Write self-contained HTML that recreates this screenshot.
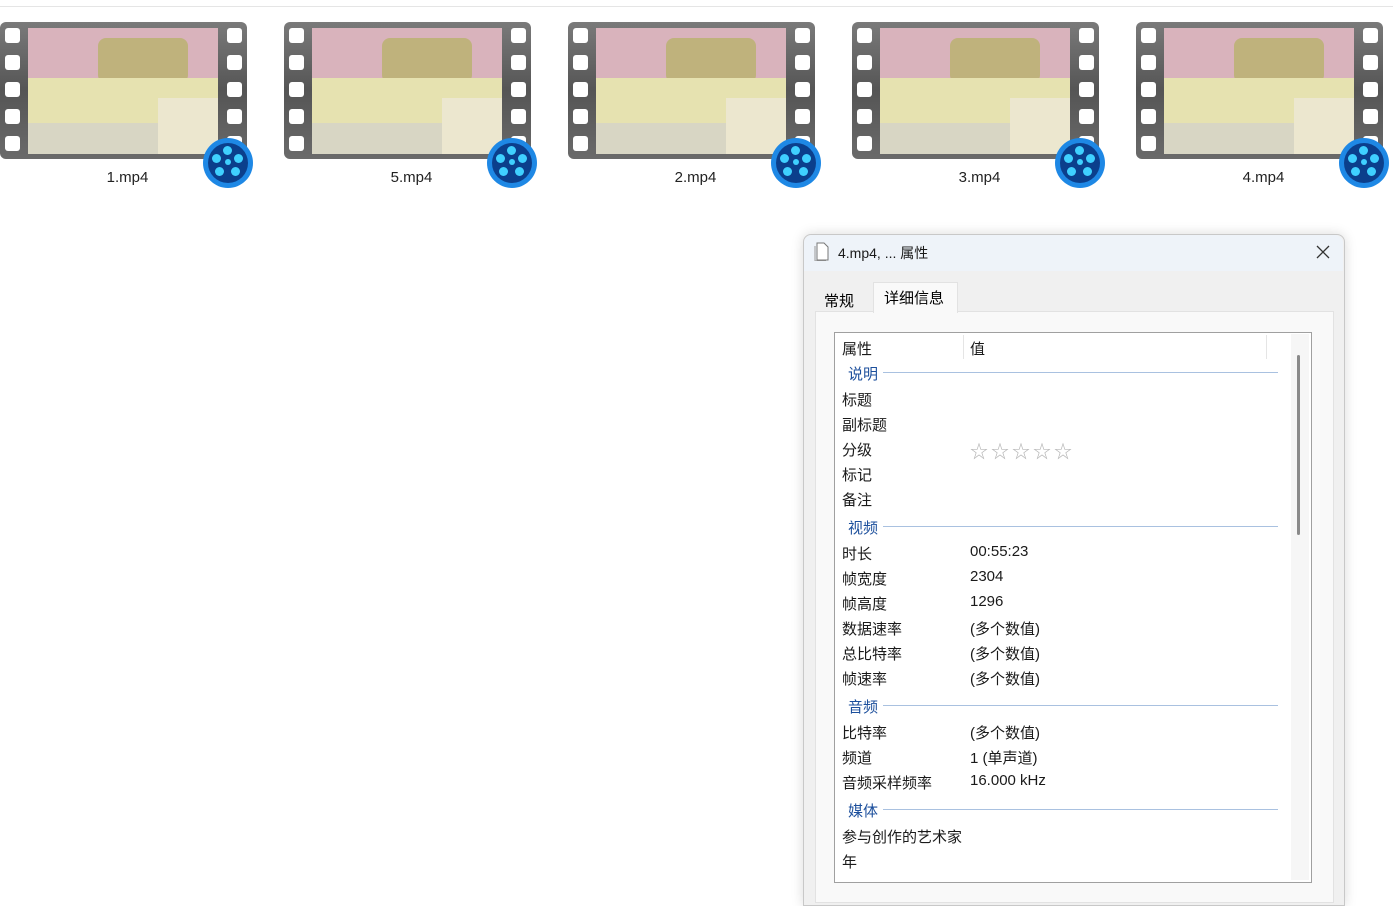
<!DOCTYPE html>
<html><head><meta charset="utf-8"><style>
body{margin:0;width:1393px;height:896px;background:#fff;position:relative;overflow:hidden;font-family:"Liberation Sans","Noto Sans CJK SC",sans-serif;}
.a{position:absolute}
.film{position:absolute;top:22px;width:247px;height:137px;background:linear-gradient(#7a7a7a,#555 50%,#6a6a6a);border-radius:6px}
.hole{position:absolute;width:15px;height:15px;background:#fff;border-radius:3px}
.pic{position:absolute;left:28px;top:6px;width:190px;height:126px;background:#d9b3bc;overflow:hidden}
.ico{position:absolute;left:203px;top:116px;width:50px;height:50px;border-radius:50%;background:#1e88e5}
.ico b{position:absolute;left:5px;top:5px;width:40px;height:40px;border-radius:50%;background:#0b3f8c}
.ico i{position:absolute;width:9px;height:9px;border-radius:50%;background:#3fd0ff}
.lbl{position:absolute;top:169px;width:247px;text-align:center;font-size:15px;color:#222}
.t{position:absolute;font-size:15px;color:#1a1a1a;left:842px}
.v{position:absolute;font-size:15px;color:#1a1a1a;left:970px}
.g{position:absolute;left:848px;font-size:15px;color:#1c4f9c}
.gl{position:absolute;left:883px;width:395px;height:1px;background:#a9c1e0}
</style></head><body>
<div class="a" style="left:0;top:6px;width:1393px;height:1px;background:#e5e5e5"></div>

<div id="thumbs"></div>
<script>
var h='';[0,284,568,852,1136].forEach(function(x,i){
var n=['1','5','2','3','4'][i];
h+='<div class="film" style="left:'+x+'px">';
[6,33,60,87,114].forEach(function(y){h+='<div class="hole" style="left:5px;top:'+y+'px"></div><div class="hole" style="left:227px;top:'+y+'px"></div>';});
h+='<div class="pic"><div class="a" style="left:70px;top:10px;width:90px;height:45px;background:#bfb27c;border-radius:8px"></div><div class="a" style="left:0;top:50px;width:190px;height:80px;background:#e6e2b0"></div><div class="a" style="left:0;top:95px;width:190px;height:31px;background:#d8d6c4"></div><div class="a" style="left:130px;top:70px;width:60px;height:56px;background:#ece7cf"></div></div>';
h+='<div class="ico"><b></b><i style="left:20px;top:8px"></i><i style="left:31px;top:16px"></i><i style="left:28px;top:29px"></i><i style="left:12px;top:29px"></i><i style="left:9px;top:16px"></i><i style="left:22px;top:21px;width:6px;height:6px;background:#3fd0ff"></i></div>';
h+='</div><div class="lbl" style="left:'+(x+4)+'px">'+n+'.mp4</div>';});
document.getElementById('thumbs').innerHTML=h;
</script>

<div class="a" style="left:803px;top:234px;width:540px;height:670px;background:#f0f0f0;border:1px solid #c8c8c8;border-radius:8px 8px 0 0;box-shadow:0 0 12px rgba(0,0,0,.15)"></div>
<div class="a" style="left:804px;top:235px;width:539px;height:36px;background:#eef3f9;border-radius:8px 8px 0 0"></div>
<svg class="a" style="left:814px;top:242px" width="16" height="19"><path d="M3 1h7l4 4v13H3z" fill="#fff" stroke="#777"/><path d="M1 4v15h11" fill="none" stroke="#999"/></svg>
<div class="a" style="left:838px;top:243px;font-size:14px;color:#1a1a1a">4.mp4, ... 属性</div>
<svg class="a" style="left:1316px;top:245px" width="14" height="14"><path d="M1 1L13 13M13 1L1 13" stroke="#333" stroke-width="1.3"/></svg>
<div class="a" style="left:815px;top:311px;width:517px;height:590px;background:#f9f9f9;border:1px solid #e2e2e2"></div>
<div class="a" style="left:873px;top:282px;width:83px;height:30px;background:#f9f9f9;border:1px solid #e2e2e2;border-bottom:none"></div>
<div class="a" style="left:824px;top:290px;font-size:15px">常规</div>
<div class="a" style="left:884px;top:287px;font-size:15px">详细信息</div>
<div class="a" style="left:834px;top:332px;width:476px;height:549px;background:#fff;border:1px solid #a0a0a0"></div>
<div class="a" style="left:963px;top:335px;width:1px;height:24px;background:#e5e5e5"></div>
<div class="a" style="left:1266px;top:335px;width:1px;height:24px;background:#e5e5e5"></div>
<div class="a" style="left:1291px;top:334px;width:18px;height:546px;background:#f6f6f6"></div>
<div class="a" style="left:1297px;top:355px;width:3px;height:180px;background:#8a8a8a;border-radius:2px"></div>
<div class="t" style="top:338px">属性</div><div class="v" style="top:338px">值</div>
<div class="g" style="top:363px">说明</div><div class="gl" style="top:372px"></div>
<div class="t" style="top:389px">标题</div>
<div class="t" style="top:414px">副标题</div>
<div class="t" style="top:439px">分级</div><div class="v" style="top:438px;color:#b5b5b5;font-size:18px;letter-spacing:3px">☆☆☆☆☆</div>
<div class="t" style="top:464px">标记</div>
<div class="t" style="top:489px">备注</div>
<div class="g" style="top:517px">视频</div><div class="gl" style="top:526px"></div>
<div class="t" style="top:543px">时长</div><div class="v" style="top:543px">00:55:23</div>
<div class="t" style="top:568px">帧宽度</div><div class="v" style="top:568px">2304</div>
<div class="t" style="top:593px">帧高度</div><div class="v" style="top:593px">1296</div>
<div class="t" style="top:618px">数据速率</div><div class="v" style="top:618px">(多个数值)</div>
<div class="t" style="top:643px">总比特率</div><div class="v" style="top:643px">(多个数值)</div>
<div class="t" style="top:668px">帧速率</div><div class="v" style="top:668px">(多个数值)</div>
<div class="g" style="top:696px">音频</div><div class="gl" style="top:705px"></div>
<div class="t" style="top:722px">比特率</div><div class="v" style="top:722px">(多个数值)</div>
<div class="t" style="top:747px">频道</div><div class="v" style="top:747px">1 (单声道)</div>
<div class="t" style="top:772px">音频采样频率</div><div class="v" style="top:772px">16.000 kHz</div>
<div class="g" style="top:800px">媒体</div><div class="gl" style="top:809px"></div>
<div class="t" style="top:826px">参与创作的艺术家</div>
<div class="t" style="top:851px">年</div>
</body></html>
